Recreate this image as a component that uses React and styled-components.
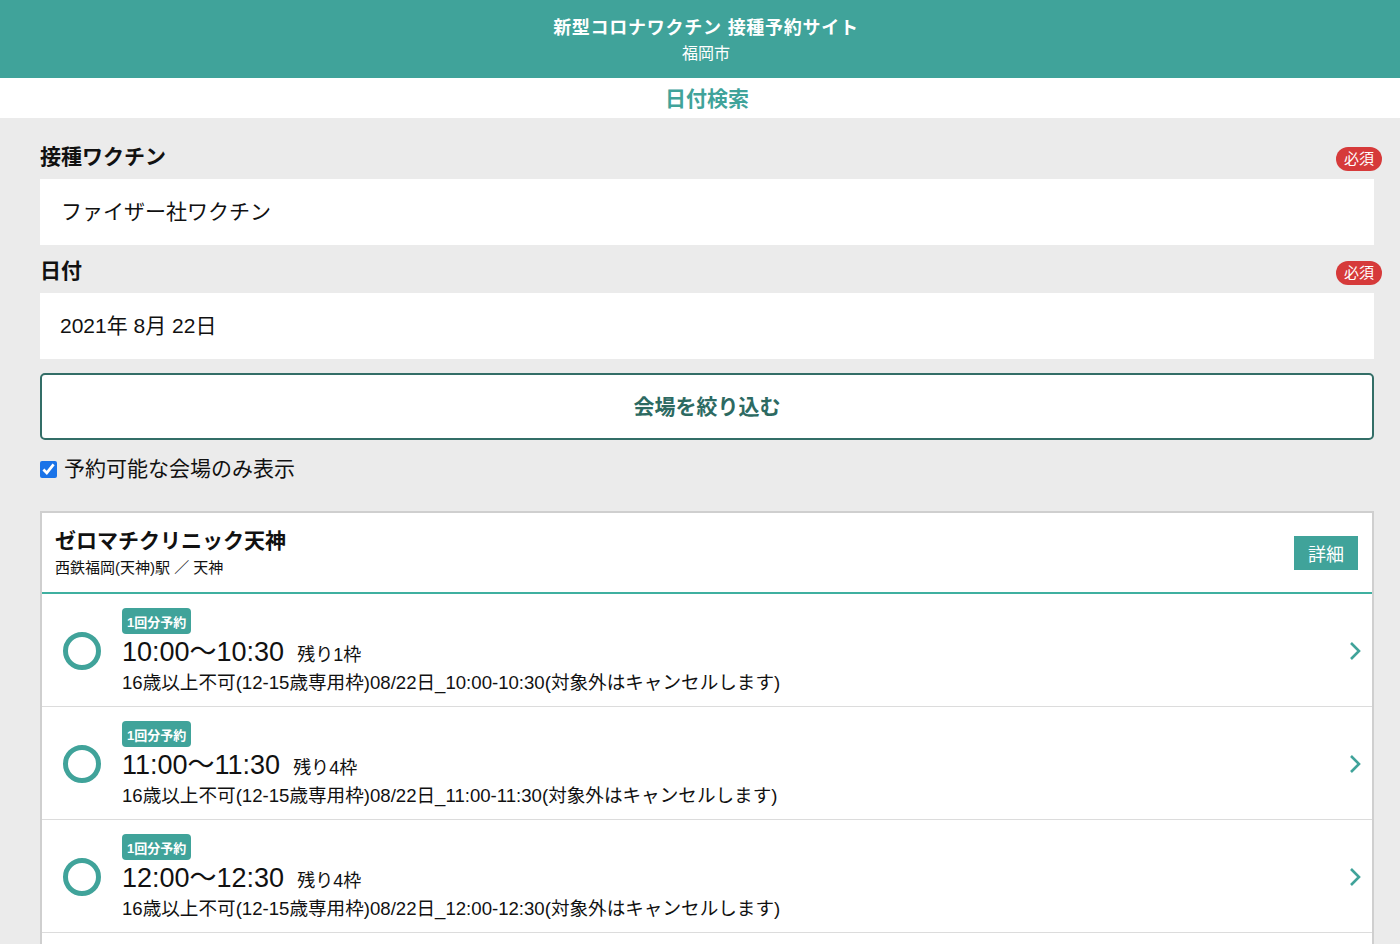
import React from "react";
import styled, { createGlobalStyle } from "styled-components";

const Global = createGlobalStyle`
  html, body { margin: 0; padding: 0; background: #ebebeb; }
  body { font-family: "Liberation Sans", "Noto Sans CJK JP", sans-serif; color: #111; }
  * { box-sizing: border-box; }
`;

const Page = styled.div`
  min-height: 944px;
  background: #ebebeb;
`;

const Header = styled.header`
  background: #40a39a;
  color: #fff;
  text-align: center;
  padding: 15px 0 11px 12px;
  height: 78px;
`;

const Title = styled.h1`
  margin: 0;
  font-size: 18px;
  line-height: 26px;
  font-weight: 700;
  letter-spacing: 0.75px;
`;

const SubTitle = styled.div`
  font-size: 16px;
  line-height: 26px;
`;

const TabBar = styled.nav`
  background: #fff;
  height: 40px;
  display: flex;
  align-items: center;
  justify-content: center;
  padding: 0 0 2px 14px;
  color: #40a39a;
  font-size: 21px;
  font-weight: 700;
`;

const Main = styled.main`
  padding: 25px 26px 0 40px;
  display: flex;
  flex-direction: column;
`;

const FieldHead = styled.div`
  display: flex;
  align-items: center;
  justify-content: space-between;
  height: 36px;
  padding-bottom: 4px;
  margin-right: -8px;
`;

const Label = styled.label`
  font-size: 21px;
  font-weight: 700;
  line-height: 28px;
  margin-bottom: 4px;
`;

const Required = styled.span`
  background: #d63a3a;
  color: #fff;
  font-size: 15px;
  line-height: 24px;
  height: 24px;
  padding: 0 8px;
  border-radius: 12px;
`;

const InputBox = styled.div`
  background: #fff;
  height: 66px;
  display: flex;
  align-items: center;
  padding: 0 0 4px ${(p) => p.$pad || 21}px;
  font-size: 21px;
  margin-bottom: ${(p) => p.$mb || 0}px;
`;

const FilterButton = styled.button`
  margin-top: 14px;
  height: 67px;
  background: #fff;
  border: 2px solid #336e67;
  border-radius: 5px;
  color: #2d6a62;
  font-family: inherit;
  font-size: 21px;
  font-weight: 700;
  padding: 0 0 4px;
  cursor: pointer;
`;

const CheckRow = styled.label`
  display: flex;
  align-items: center;
  gap: 7px;
  margin-top: 14px;
  font-size: 21px;
  line-height: 30px;
`;

const Check = styled.input`
  width: 17px;
  height: 17px;
  margin: 0;
  accent-color: #1a73e8;
`;

const Card = styled.section`
  margin-top: 27px;
  background: #fff;
  border: 2px solid #cfcfcf;
  border-bottom: none;
`;

const CardHead = styled.div`
  display: flex;
  align-items: center;
  justify-content: space-between;
  padding: 13px 14px 12px 13px;
  border-bottom: 2px solid #3fb0a0;
`;

const VenueName = styled.h2`
  margin: 0;
  font-size: 21px;
  font-weight: 700;
  line-height: 30px;
`;

const VenueSub = styled.div`
  font-size: 15px;
  line-height: 24px;
`;

const DetailButton = styled.button`
  width: 64px;
  height: 34px;
  border: none;
  background: #40a39a;
  color: #fff;
  font-family: inherit;
  font-size: 18px;
  padding: 0;
`;

const Row = styled.div`
  display: flex;
  align-items: center;
  height: 113px;
  border-bottom: 1px solid #dcdcdc;
  padding: 1px 10px 0 21px;
`;

const Circle = styled.span`
  width: 38px;
  height: 38px;
  border-radius: 50%;
  border: 5px solid #40a39a;
  flex: none;
  margin-right: 21px;
`;

const RowBody = styled.div`
  flex: 1;
  display: flex;
  flex-direction: column;
  align-items: flex-start;
`;

const Tag = styled.span`
  display: inline-flex;
  align-items: center;
  background: #40a39a;
  color: #fff;
  font-size: 13px;
  font-weight: 700;
  height: 26px;
  padding: 0 5px;
  border-radius: 4px;
`;

const TimeLine = styled.div`
  display: flex;
  align-items: baseline;
  gap: 13px;
  line-height: 36px;
`;

const Time = styled.span`
  font-size: 27px;
`;

const Remain = styled.span`
  font-size: 18px;
`;

const Desc = styled.div`
  font-size: 18.6px;
  line-height: 20px;
`;

const Chevron = () => (
  <svg width="14" height="20" viewBox="0 0 14 20" style={{ flex: "none" }}>
    <path d="M3 2 L11 10 L3 18" fill="none" stroke="#40a39a" strokeWidth="2.6" />
  </svg>
);

const slots = [
  { t: "10:00〜10:30", r: 1, d: "10:00-10:30" },
  { t: "11:00〜11:30", r: 4, d: "11:00-11:30" },
  { t: "12:00〜12:30", r: 4, d: "12:00-12:30" },
  { t: "13:00〜13:30", r: 4, d: "13:00-13:30" },
];

export default function App() {
  return (
    <Page>
      <Global />
      <Header>
        <Title>新型コロナワクチン 接種予約サイト</Title>
        <SubTitle>福岡市</SubTitle>
      </Header>
      <TabBar>日付検索</TabBar>
      <Main>
        <FieldHead>
          <Label>接種ワクチン</Label>
          <Required>必須</Required>
        </FieldHead>
        <InputBox $mb={12}>ファイザー社ワクチン</InputBox>
        <FieldHead>
          <Label>日付</Label>
          <Required>必須</Required>
        </FieldHead>
        <InputBox $pad={20}>2021年 8月 22日</InputBox>
        <FilterButton>会場を絞り込む</FilterButton>
        <CheckRow>
          <Check type="checkbox" defaultChecked />
          予約可能な会場のみ表示
        </CheckRow>
        <Card>
          <CardHead>
            <div>
              <VenueName>ゼロマチクリニック天神</VenueName>
              <VenueSub>西鉄福岡(天神)駅 ／ 天神</VenueSub>
            </div>
            <DetailButton>詳細</DetailButton>
          </CardHead>
          {slots.map((s) => (
            <Row key={s.t}>
              <Circle />
              <RowBody>
                <Tag>1回分予約</Tag>
                <TimeLine>
                  <Time>{s.t}</Time>
                  <Remain>残り{s.r}枠</Remain>
                </TimeLine>
                <Desc>16歳以上不可(12-15歳専用枠)08/22日_{s.d}(対象外はキャンセルします)</Desc>
              </RowBody>
              <Chevron />
            </Row>
          ))}
        </Card>
      </Main>
    </Page>
  );
}
